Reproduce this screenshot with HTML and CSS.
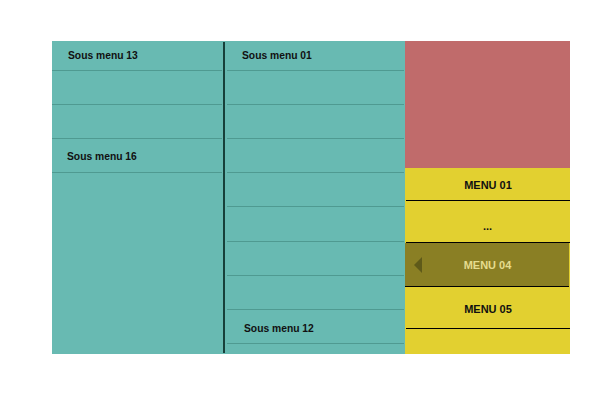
FILE: index.html
```html
<!DOCTYPE html>
<html>
<head>
<meta charset="utf-8">
<link rel="stylesheet" href="styles.css">
</head>
<body>
<div class="stage">
  <div class="panel">
    <div class="col col-left">
      <div class="row first"><span class="lbl l13">Sous menu 13</span></div>
      <div class="row"></div>
      <div class="row"></div>
      <div class="row"><span class="lbl l16">Sous menu 16</span></div>
    </div>
    <div class="divider"></div>
    <div class="col col-mid">
      <div class="row first"><span class="lbl l01">Sous menu 01</span></div>
      <div class="row"></div>
      <div class="row"></div>
      <div class="row"></div>
      <div class="row"></div>
      <div class="row tall"></div>
      <div class="row"></div>
      <div class="row"></div>
      <div class="row"><span class="lbl l12">Sous menu 12</span></div>
    </div>
  </div>
  <div class="side">
    <div class="banner"></div>
    <div class="menu">
      <div class="item i1">MENU 01</div>
      <div class="item i2">...</div>
      <div class="item i3 active"><span class="arrow"></span>MENU 04</div>
      <div class="item i4">MENU 05</div>
    </div>
  </div>
</div>
</body>
</html>
```

FILE: styles.css
```css
* { box-sizing: border-box; }
html, body { margin: 0; padding: 0; background: #fff; }
body { font-family: "Liberation Sans", Arial, sans-serif; }

.stage {
  display: flex;
  margin: 41px 0 0 52px;
  width: 518px;
  height: 313px;
}

.panel {
  display: flex;
  width: 353px;
  background: #68bab2;
}

.col { display: flex; flex-direction: column; }
.col-left { width: 171px; }
.col-mid { width: 180px; }

.divider {
  width: 2px;
  margin: 1px 0 1px;
  background: #17403a;
}

.row {
  height: 34px;
  border-bottom: 1px solid #4f9a91;
  display: flex;
  align-items: center;
  font-size: 10.3px;
  font-weight: bold;
  color: #111;
}
.row.first { height: 30px; }
.row.tall { height: 35px; }
.col-mid .row { margin: 0 1px 0 2px; }
.col-left .row { margin-right: 1px; }

.lbl { display: block; }
.l13 { padding-left: 16px; }
.l16 { padding-left: 15px; padding-top: 1px; }
.l01 { padding-left: 15px; }
.l12 { padding-left: 17px; padding-top: 4px; }

.side {
  width: 165px;
  display: flex;
  flex-direction: column;
}
.banner {
  height: 127px;
  background: #c06b6b;
}
.menu {
  flex: 1;
  background: #e2d030;
  display: flex;
  flex-direction: column;
}
.item {
  position: relative;
  display: flex;
  align-items: center;
  justify-content: center;
  border-bottom: 1px solid #000;
  margin-left: 1px;
  font-size: 11px;
  font-weight: bold;
  color: #111;
}
.i1 { height: 33px; padding-top: 2px; }
.i2 { height: 42px; padding-top: 8px; padding-right: 1px; }
.i3 { height: 44px; padding-top: 1px; }
.i4 { height: 42px; padding-top: 3px; }

.active {
  background: #8a7f24;
  color: #e5dc8e;
  margin-left: 0;
  padding-left: 1px;
  margin-right: 1px;
}
.arrow {
  position: absolute;
  left: 9px;
  top: 14px;
  width: 0;
  height: 0;
  border-top: 8px solid transparent;
  border-bottom: 8px solid transparent;
  border-right: 8px solid #5f5a19;
}
```
